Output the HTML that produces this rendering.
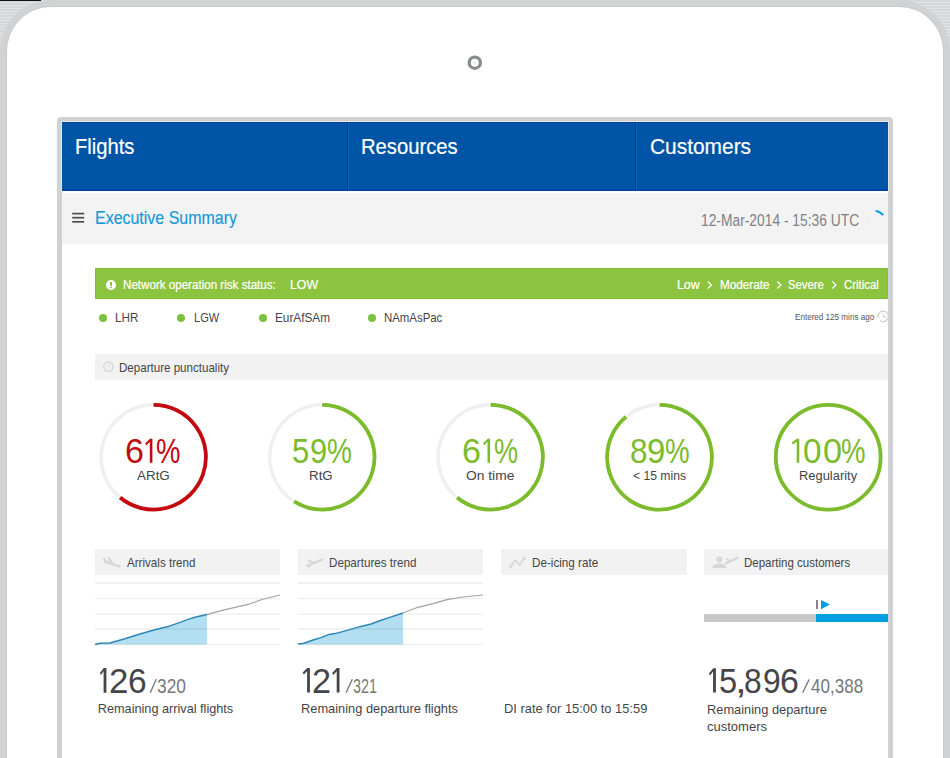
<!DOCTYPE html>
<html><head><meta charset="utf-8"><style>
html,body{margin:0;padding:0;}
body{width:950px;height:758px;overflow:hidden;position:relative;background:repeating-linear-gradient(to bottom,#d6d7d9 0 2px,#e2e3e4 2px 3px);font-family:"Liberation Sans", sans-serif;}
.a{position:absolute;}
.tx{position:absolute;font-family:"Liberation Sans", sans-serif;line-height:1;white-space:pre;}
</style></head><body>
<div class="a" style="left:0;top:0;width:950px;height:820px;background:#d1d2d4;border-radius:51px 51px 0 0;"></div>
<div class="a" style="left:0;top:0;width:41px;height:1px;background:#111;"></div>
<div class="a" style="left:6px;top:6px;width:938px;height:820px;background:#c9cacc;border-radius:45px 45px 0 0;"></div>
<div class="a" style="left:7px;top:7px;width:936px;height:820px;background:#ffffff;border-radius:44px 44px 0 0;"></div>
<!-- camera -->
<svg class="a" style="left:0;top:0" width="950" height="120">
<circle cx="474.8" cy="62.7" r="5.6" fill="#fff" stroke="#898b8d" stroke-width="3.3"/>
<rect x="473.3" y="61.2" width="3" height="3" fill="#ececec"/>
</svg>
<!-- screen -->
<div class="a" style="left:57px;top:117px;width:836px;height:700px;background:#d0d1d3;border-radius:4px 4px 0 0;"></div>
<div class="a" style="left:61px;top:121px;width:828px;height:71px;background:#ebe5df;"></div>
<div class="a" style="left:62px;top:122px;width:826px;height:700px;background:#ffffff;"></div>
<!-- nav -->
<div class="a" style="left:62px;top:122px;width:826px;height:69px;background:#0054a6;"></div>
<div class="a" style="left:62px;top:122px;width:826px;height:1px;background:#0046a0;"></div>
<div class="a" style="left:62px;top:189px;width:826px;height:2px;background:#0045a0;"></div>
<div class="a" style="left:347px;top:122px;width:1px;height:69px;background:#003a8e;"></div>
<div class="a" style="left:348px;top:122px;width:1px;height:69px;background:#0a5eb3;"></div>
<div class="a" style="left:635px;top:122px;width:1px;height:69px;background:#003a8e;"></div>
<div class="a" style="left:636px;top:122px;width:1px;height:69px;background:#0a5eb3;"></div>
<!-- summary bar -->
<div class="a" style="left:62px;top:193px;width:826px;height:51px;background:#f3f3f3;"></div>
<svg class="a" style="left:0;top:0" width="950" height="250">
<g stroke="#4d4d4f" stroke-width="1.7">
<line x1="72.2" y1="213.6" x2="84.2" y2="213.6"/>
<line x1="72.2" y1="217.7" x2="84.2" y2="217.7"/>
<line x1="72.2" y1="221.8" x2="84.2" y2="221.8"/>
</g></svg>
<svg class="a" style="left:0;top:0" width="950" height="758">
<path d="M876.5 211 Q880 212 882.6 214.5" fill="none" stroke="#0a9ee0" stroke-width="2.2" stroke-linecap="round"/>
<line x1="868" y1="216.5" x2="868" y2="218.5" stroke="#cde8f5" stroke-width="1"/>
</svg>
<!-- green bar -->
<div class="a" style="left:95px;top:268px;width:793px;height:31px;background:#8cc43f;box-shadow:inset 0 0 0 1px #82bd35;"></div>
<div class="a" style="left:106px;top:279.7px;width:10px;height:10px;background:#fff;border-radius:50%;"></div>
<div class="a" style="left:110.3px;top:281.5px;width:1.6px;height:4px;background:#8cc43f;"></div>
<div class="a" style="left:110.3px;top:286.5px;width:1.6px;height:1.6px;background:#8cc43f;"></div>
<svg class="a" style="left:0;top:0" width="950" height="758">
<g fill="none" stroke="#fff" stroke-width="1.2">
<path d="M707.8 281.5 L711.5 285 L707.8 288.5"/>
<path d="M777.3 281.5 L781 285 L777.3 288.5"/>
<path d="M832.3 281.5 L836 285 L832.3 288.5"/>
</g>
</svg>
<!-- region dots -->
<div class="a" style="left:98.5px;top:314px;width:8px;height:8px;background:#7dc142;border-radius:50%;"></div>
<div class="a" style="left:177.3px;top:314px;width:8px;height:8px;background:#7dc142;border-radius:50%;"></div>
<div class="a" style="left:258.5px;top:314px;width:8px;height:8px;background:#7dc142;border-radius:50%;"></div>
<div class="a" style="left:367.5px;top:314px;width:8px;height:8px;background:#7dc142;border-radius:50%;"></div>
<svg class="a" style="left:0;top:0" width="950" height="400">
<g fill="none" stroke="#d2d2d2" stroke-width="1.2">
<path d="M878.2 318 A5.2 5.2 0 1 1 880 320.5"/>
<path d="M883.4 313.4 V316.6 H886"/>
</g>
</svg>
<!-- departure punctuality -->
<div class="a" style="left:95px;top:354px;width:793px;height:26px;background:#f2f2f2;"></div>
<svg class="a" style="left:0;top:0" width="950" height="400">
<g fill="none" stroke="#d9d9d9" stroke-width="1.7">
<circle cx="108.4" cy="366.8" r="4.6"/>
</g>
<path d="M108.4 364 V367 H110.5" fill="none" stroke="#e2e2e2" stroke-width="1"/>
</svg>

<!-- panel headers -->
<div class="a" style="left:95px;top:549px;width:185px;height:26px;background:#f2f2f2;"></div>
<div class="a" style="left:298px;top:549px;width:185px;height:26px;background:#f2f2f2;"></div>
<div class="a" style="left:501px;top:549px;width:186px;height:26px;background:#f2f2f2;"></div>
<div class="a" style="left:704px;top:549px;width:184px;height:26px;background:#f2f2f2;"></div>
<!-- departing customers bar -->
<div class="a" style="left:704px;top:614px;width:112px;height:7.5px;background:#c8c8c8;"></div>
<div class="a" style="left:816px;top:614px;width:72px;height:7.5px;background:#009fe0;"></div>
<div class="a" style="left:816px;top:600.3px;width:1.7px;height:8.7px;background:#858585;"></div>
<svg class="a" style="left:0;top:0" width="950" height="758">
<polygon points="821,600 830,604.6 821,609.3" fill="#009fe0"/>
<g fill="none" stroke="#d8d8d8" stroke-linecap="round" stroke-linejoin="round">
<!-- landing plane -->
<path d="M105 561.8 L119.3 566.3" stroke-width="2.6"/>
<path d="M104 558.6 L106.8 562.6" stroke-width="2.2"/>
<path d="M108.8 558 L112.8 564.2" stroke-width="2.4"/>
<!-- departing plane -->
<path d="M307.5 565.8 L322 559.6" stroke-width="2.6"/>
<path d="M309 560.8 L313.5 562.6" stroke-width="2.2"/>
<path d="M306.8 565.8 L309.5 566.2" stroke-width="2"/>
<!-- de-icing -->
<polyline points="510.9,566.5 515.2,560 519.5,565.2 524.4,558.1" stroke-width="1.8"/>
<!-- person plane -->
<path d="M726 563.4 L737.6 557.6" stroke-width="2.4"/>
<path d="M727 559.2 L730.5 561.2" stroke-width="2"/>
</g>
<g fill="#d8d8d8">
<circle cx="510.9" cy="566.5" r="1.6"/>
<circle cx="524.4" cy="558.1" r="1.6"/>
<circle cx="719.3" cy="559.2" r="3"/>
<path d="M712.2 568 Q712.8 563.6 719.3 563.2 Q725.8 563.6 726.6 568 Z"/>
</g>
</svg>
<svg class="a" style="left:0;top:0" width="950" height="758">
<g stroke="#7a7b7d" stroke-width="1.35" stroke-linecap="round">
<line x1="150.5" y1="692.3" x2="156.1" y2="679.6"/>
<line x1="346.3" y1="692.3" x2="352.1" y2="679.6"/>
<line x1="802.9" y1="692.3" x2="808.9" y2="679.9"/>
</g>
<path d='M118.88 496.54 A52.4 52.4 0 0 1 151.90 404.82' fill='none' stroke='#efefef' stroke-width='3.4'/><path d='M153.5 404.8 A52.4 52.4 0 1 1 120.10 497.57' fill='none' stroke='#c20a10' stroke-width='3.8'/>
<path d='M292.69 500.56 A52.4 52.4 0 0 1 320.50 404.82' fill='none' stroke='#efefef' stroke-width='3.4'/><path d='M322.1 404.8 A52.4 52.4 0 1 1 294.02 501.44' fill='none' stroke='#7bbb2c' stroke-width='3.8'/>
<path d='M455.88 496.54 A52.4 52.4 0 0 1 488.90 404.82' fill='none' stroke='#efefef' stroke-width='3.4'/><path d='M490.5 404.8 A52.4 52.4 0 1 1 457.10 497.57' fill='none' stroke='#7bbb2c' stroke-width='3.8'/>
<path d='M627.35 415.82 A52.4 52.4 0 0 1 657.90 404.82' fill='none' stroke='#efefef' stroke-width='3.4'/><path d='M659.5 404.8 A52.4 52.4 0 1 1 626.10 416.83' fill='none' stroke='#7bbb2c' stroke-width='3.8'/>
<circle cx='828.2' cy='457.2' r='52.4' fill='none' stroke='#7bbb2c' stroke-width='3.8'/>
<polygon points='95.0,644.5 95.0,644.4 100.0,643.2 110.0,643.0 124.0,639.0 140.0,634.0 154.0,630.0 168.0,626.6 180.0,622.4 188.0,619.4 196.0,617.0 207.0,614.6 207.0,644.5' fill='#b3dff2'/><line x1='95' y1='583' x2='280' y2='583' stroke='rgba(0,0,0,0.075)' stroke-width='1.3'/><line x1='95' y1='598.6' x2='280' y2='598.6' stroke='rgba(0,0,0,0.075)' stroke-width='1.3'/><line x1='95' y1='614.1' x2='280' y2='614.1' stroke='rgba(0,0,0,0.075)' stroke-width='1.3'/><line x1='95' y1='629' x2='280' y2='629' stroke='rgba(0,0,0,0.075)' stroke-width='1.3'/><line x1='95' y1='644.4' x2='280' y2='644.4' stroke='rgba(0,0,0,0.075)' stroke-width='1.3'/><polyline points='95.0,644.4 100.0,643.2 110.0,643.0 124.0,639.0 140.0,634.0 154.0,630.0 168.0,626.6 180.0,622.4 188.0,619.4 196.0,617.0 207.0,614.6' fill='none' stroke='#2d86b5' stroke-width='1.5' stroke-linejoin='round'/><polyline points='207.0,614.6 222.0,610.4 234.0,607.6 248.0,604.4 262.0,599.5 280.0,595.0' fill='none' stroke='#a3a3a3' stroke-width='1.1'/>
<polygon points='298.0,644.5 298.0,644.0 304.0,643.2 313.0,640.0 321.0,637.6 329.0,634.4 335.0,633.6 347.0,630.4 361.0,626.4 371.0,624.0 379.0,621.0 389.0,617.6 403.0,613.0 403.0,644.5' fill='#b3dff2'/><line x1='298' y1='583' x2='483' y2='583' stroke='rgba(0,0,0,0.075)' stroke-width='1.3'/><line x1='298' y1='598.6' x2='483' y2='598.6' stroke='rgba(0,0,0,0.075)' stroke-width='1.3'/><line x1='298' y1='614.1' x2='483' y2='614.1' stroke='rgba(0,0,0,0.075)' stroke-width='1.3'/><line x1='298' y1='629' x2='483' y2='629' stroke='rgba(0,0,0,0.075)' stroke-width='1.3'/><line x1='298' y1='644.4' x2='483' y2='644.4' stroke='rgba(0,0,0,0.075)' stroke-width='1.3'/><polyline points='298.0,644.0 304.0,643.2 313.0,640.0 321.0,637.6 329.0,634.4 335.0,633.6 347.0,630.4 361.0,626.4 371.0,624.0 379.0,621.0 389.0,617.6 403.0,613.0' fill='none' stroke='#2d86b5' stroke-width='1.5' stroke-linejoin='round'/><polyline points='403.0,613.0 417.0,607.6 433.0,603.6 447.0,599.6 463.0,597.0 483.0,595.0' fill='none' stroke='#a3a3a3' stroke-width='1.1'/>
<polygon points='152.40,438.80 152.40,462.80 149.80,462.80 149.80,441.79 146.30,445.50 145.20,443.50 150.00,438.80' fill='#c20a10'/><polygon points='490.10,438.80 490.10,462.80 487.50,462.80 487.50,441.79 484.20,445.20 483.10,443.20 487.70,438.80' fill='#7bbb2c'/><polygon points='799.30,438.80 799.30,462.80 796.70,462.80 796.70,441.79 792.90,444.40 791.80,442.40 796.90,438.80' fill='#7bbb2c'/><polygon points='106.40,667.90 106.40,692.70 103.60,692.70 103.60,671.12 101.00,675.00 99.90,673.00 103.80,667.90' fill='#444548'/><polygon points='309.90,668.00 309.90,692.50 307.10,692.50 307.10,671.22 303.80,674.50 302.70,672.50 307.30,668.00' fill='#444548'/><polygon points='339.50,668.00 339.50,692.50 336.70,692.50 336.70,671.22 333.30,675.10 332.20,673.10 336.90,668.00' fill='#444548'/><polygon points='715.90,668.20 715.90,692.60 713.10,692.60 713.10,671.42 710.00,675.50 708.90,673.50 713.30,668.20' fill='#444548'/>
</svg>
<span class='tx' style='left:74.89px;top:136.00px;font-size:22.3px;color:#ffffff;-webkit-text-stroke:0.2px #ffffff;transform:scaleX(0.9048);transform-origin:0 0;'>Flights</span>
<span class='tx' style='left:361.18px;top:136.00px;font-size:22.3px;color:#ffffff;-webkit-text-stroke:0.2px #ffffff;transform:scaleX(0.9077);transform-origin:0 0;'>Resources</span>
<span class='tx' style='left:649.76px;top:136.00px;font-size:22.3px;color:#ffffff;-webkit-text-stroke:0.2px #ffffff;transform:scaleX(0.9377);transform-origin:0 0;'>Customers</span>
<span class='tx' style='left:94.81px;top:208.70px;font-size:18px;color:#1598d8;-webkit-text-stroke:0.15px #1598d8;transform:scaleX(0.8868);transform-origin:0 0;'>Executive Summary</span>
<span class='tx' style='left:700.71px;top:213.20px;font-size:15.6px;color:#808184;transform:scaleX(0.8859);transform-origin:0 0;'>12-Mar-2014 - 15:36 UTC</span>
<span class='tx' style='left:122.83px;top:278.80px;font-size:12px;color:#ffffff;-webkit-text-stroke:0.22px #ffffff;transform:scaleX(0.9667);transform-origin:0 0;'>Network operation risk status:</span>
<span class='tx' style='left:289.68px;top:278.80px;font-size:12px;color:#ffffff;-webkit-text-stroke:0.22px #ffffff;transform:scaleX(1.0231);transform-origin:0 0;'>LOW</span>
<span class='tx' style='left:677.08px;top:278.80px;font-size:12px;color:#ffffff;-webkit-text-stroke:0.22px #ffffff;transform:scaleX(1.0238);transform-origin:0 0;'>Low</span>
<span class='tx' style='left:719.52px;top:278.80px;font-size:12px;color:#ffffff;-webkit-text-stroke:0.22px #ffffff;transform:scaleX(0.9776);transform-origin:0 0;'>Moderate</span>
<span class='tx' style='left:788.36px;top:278.80px;font-size:12px;color:#ffffff;-webkit-text-stroke:0.22px #ffffff;transform:scaleX(0.9378);transform-origin:0 0;'>Severe</span>
<span class='tx' style='left:843.85px;top:278.80px;font-size:12px;color:#ffffff;-webkit-text-stroke:0.22px #ffffff;transform:scaleX(0.9486);transform-origin:0 0;'>Critical</span>
<span class='tx' style='left:115.04px;top:312.40px;font-size:12.2px;color:#444548;transform:scaleX(0.9565);transform-origin:0 0;'>LHR</span>
<span class='tx' style='left:194.09px;top:312.40px;font-size:12.2px;color:#444548;transform:scaleX(0.9074);transform-origin:0 0;'>LGW</span>
<span class='tx' style='left:275.23px;top:312.40px;font-size:12.2px;color:#444548;transform:scaleX(0.9655);transform-origin:0 0;'>EurAfSAm</span>
<span class='tx' style='left:384.26px;top:312.40px;font-size:12.2px;color:#444548;transform:scaleX(0.9361);transform-origin:0 0;'>NAmAsPac</span>
<span class='tx' style='left:794.72px;top:313.10px;font-size:9.2px;color:#555659;transform:scaleX(0.8809);transform-origin:0 0;'>Entered 125 mins ago</span>
<span class='tx' style='left:119.41px;top:361.00px;font-size:13px;color:#444548;transform:scaleX(0.8902);transform-origin:0 0;'>Departure punctuality</span>
<span class='tx' style='left:125.23px;top:433.80px;font-size:34.5px;color:#c20a10;transform:scaleX(0.9875);transform-origin:0 0;'>6</span>
<span class='tx' style='left:156.00px;top:433.80px;font-size:34.5px;color:#c20a10;transform:scaleX(0.7966);transform-origin:0 0;'>%</span>
<span class='tx' style='left:136.70px;top:470.00px;font-size:12.5px;color:#444548;transform:scaleX(1.0733);transform-origin:0 0;'>ARtG</span>
<span class='tx' style='left:291.90px;top:433.80px;font-size:34.5px;color:#7bbb2c;transform:scaleX(0.9000);transform-origin:0 0;'>5</span>
<span class='tx' style='left:310.41px;top:433.80px;font-size:34.5px;color:#7bbb2c;transform:scaleX(0.8938);transform-origin:0 0;'>9</span>
<span class='tx' style='left:327.39px;top:433.80px;font-size:34.5px;color:#7bbb2c;transform:scaleX(0.8138);transform-origin:0 0;'>%</span>
<span class='tx' style='left:309.43px;top:469.80px;font-size:12.5px;color:#444548;transform:scaleX(1.0667);transform-origin:0 0;'>RtG</span>
<span class='tx' style='left:462.42px;top:433.80px;font-size:34.5px;color:#7bbb2c;transform:scaleX(0.9875);transform-origin:0 0;'>6</span>
<span class='tx' style='left:493.61px;top:433.80px;font-size:34.5px;color:#7bbb2c;transform:scaleX(0.7862);transform-origin:0 0;'>%</span>
<span class='tx' style='left:466.20px;top:469.80px;font-size:12.5px;color:#444548;transform:scaleX(1.1048);transform-origin:0 0;'>On time</span>
<span class='tx' style='left:629.58px;top:433.80px;font-size:34.5px;color:#7bbb2c;transform:scaleX(0.9176);transform-origin:0 0;'>8</span>
<span class='tx' style='left:646.59px;top:433.80px;font-size:34.5px;color:#7bbb2c;transform:scaleX(0.9563);transform-origin:0 0;'>9</span>
<span class='tx' style='left:665.10px;top:433.80px;font-size:34.5px;color:#7bbb2c;transform:scaleX(0.8034);transform-origin:0 0;'>%</span>
<span class='tx' style='left:632.78px;top:469.80px;font-size:12.5px;color:#444548;transform:scaleX(0.9717);transform-origin:0 0;'>&lt; 15 mins</span>
<span class='tx' style='left:803.24px;top:433.80px;font-size:34.5px;color:#7bbb2c;transform:scaleX(0.9647);transform-origin:0 0;'>0</span>
<span class='tx' style='left:822.51px;top:433.80px;font-size:34.5px;color:#7bbb2c;transform:scaleX(0.9941);transform-origin:0 0;'>0</span>
<span class='tx' style='left:841.20px;top:433.80px;font-size:34.5px;color:#7bbb2c;transform:scaleX(0.8000);transform-origin:0 0;'>%</span>
<span class='tx' style='left:798.77px;top:469.60px;font-size:12.5px;color:#444548;transform:scaleX(1.0327);transform-origin:0 0;'>Regularity</span>
<span class='tx' style='left:126.50px;top:556.80px;font-size:12.7px;color:#444548;transform:scaleX(0.9149);transform-origin:0 0;'>Arrivals trend</span>
<span class='tx' style='left:329.08px;top:556.80px;font-size:12.7px;color:#444548;transform:scaleX(0.9181);transform-origin:0 0;'>Departures trend</span>
<span class='tx' style='left:532.08px;top:556.80px;font-size:12.7px;color:#444548;transform:scaleX(0.9200);transform-origin:0 0;'>De-icing rate</span>
<span class='tx' style='left:743.59px;top:556.80px;font-size:12.7px;color:#444548;transform:scaleX(0.9069);transform-origin:0 0;'>Departing customers</span>
<span class='tx' style='left:109.15px;top:663.60px;font-size:35.8px;color:#444548;transform:scaleX(0.9750);transform-origin:0 0;'>2</span>
<span class='tx' style='left:127.53px;top:663.60px;font-size:35.8px;color:#444548;transform:scaleX(0.9353);transform-origin:0 0;'>6</span>
<span class='tx' style='left:157.40px;top:676.50px;font-size:19.3px;color:#77787a;transform:scaleX(0.9000);transform-origin:0 0;'>320</span>
<span class='tx' style='left:97.80px;top:702.90px;font-size:12.7px;color:#444548;'>Remaining arrival flights</span>
<span class='tx' style='left:312.49px;top:663.60px;font-size:35.8px;color:#444548;transform:scaleX(0.9563);transform-origin:0 0;'>2</span>
<span class='tx' style='left:353.46px;top:676.50px;font-size:19.3px;color:#77787a;transform:scaleX(0.7419);transform-origin:0 0;'>321</span>
<span class='tx' style='left:300.79px;top:702.90px;font-size:12.7px;color:#444548;transform:scaleX(1.0117);transform-origin:0 0;'>Remaining departure flights</span>
<span class='tx' style='left:503.68px;top:702.90px;font-size:12.7px;color:#444548;transform:scaleX(1.0164);transform-origin:0 0;'>DI rate for 15:00 to 15:59</span>
<span class='tx' style='left:718.68px;top:663.60px;font-size:35.8px;color:#444548;transform:scaleX(0.9118);transform-origin:0 0;'>5</span>
<span class='tx' style='left:734.68px;top:663.60px;font-size:35.8px;color:#444548;transform:scaleX(1.1750);transform-origin:0 0;'>,</span>
<span class='tx' style='left:743.92px;top:663.60px;font-size:35.8px;color:#444548;transform:scaleX(0.8882);transform-origin:0 0;'>8</span>
<span class='tx' style='left:762.52px;top:663.60px;font-size:35.8px;color:#444548;transform:scaleX(0.8875);transform-origin:0 0;'>9</span>
<span class='tx' style='left:779.81px;top:663.60px;font-size:35.8px;color:#444548;transform:scaleX(0.9471);transform-origin:0 0;'>6</span>
<span class='tx' style='left:810.80px;top:676.50px;font-size:19.3px;color:#77787a;transform:scaleX(0.8845);transform-origin:0 0;'>40,388</span>
<span class='tx' style='left:707.49px;top:703.50px;font-size:12.7px;color:#444548;transform:scaleX(1.0111);transform-origin:0 0;'>Remaining departure</span>
<span class='tx' style='left:706.90px;top:721.20px;font-size:12.7px;color:#444548;transform:scaleX(1.0259);transform-origin:0 0;'>customers</span>
</body></html>
